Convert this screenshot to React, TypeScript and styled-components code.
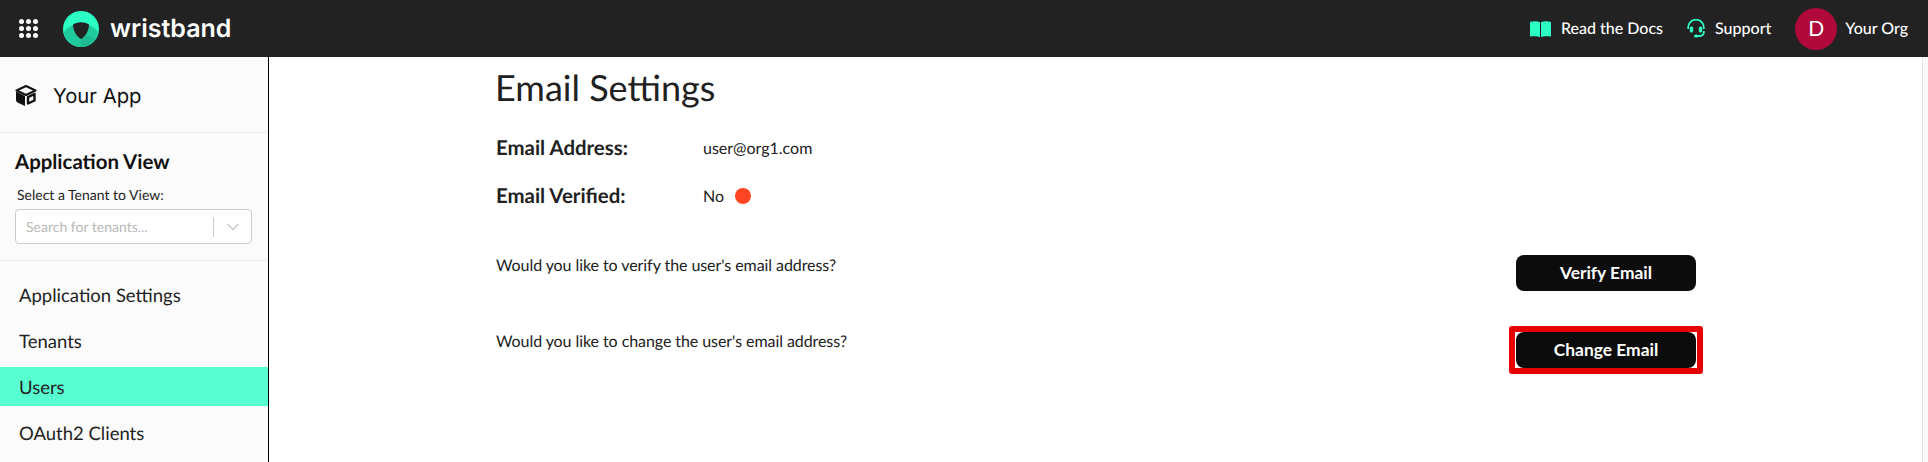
import styled, { createGlobalStyle } from 'styled-components';
import { FiChevronDown } from 'react-icons/fi';

const GlobalStyle = createGlobalStyle`
  html, body {
    margin: 0;
    height: 100%;
    overflow: hidden;
    background: #fff;
    font-family: 'Lato', 'Liberation Sans', sans-serif;
    color: #212121;
    text-rendering: geometricPrecision;
  }
  * { box-sizing: border-box; }
`;

const Page = styled.div`
  display: flex;
  flex-direction: column;
  height: 462px;
`;

const TopBar = styled.header`
  flex: 0 0 57px;
  display: flex;
  align-items: center;
  justify-content: space-between;
  padding: 0 20px 0 19px;
  background: #222222;
  color: #fff;
`;

const BarGroup = styled.div`
  display: flex;
  align-items: center;
`;

const AppGrid = styled.div`
  display: grid;
  grid-template-columns: repeat(3, 5px);
  gap: 2px;
  margin-right: 25px;
  span {
    width: 5px;
    height: 5px;
    border-radius: 50%;
    background: #fff;
  }
`;

const BrandName = styled.span`
  margin-left: 11px;
  font-family: 'Inter', sans-serif;
  font-size: 25px;
  font-weight: 600;
`;

const BarLink = styled.a`
  display: flex;
  align-items: center;
  gap: 10px;
  margin-right: 24px;
  font-size: 16px;
  font-weight: 500;
  svg { flex: none; }
`;

const Avatar = styled.div`
  width: 42px;
  height: 42px;
  margin-right: 8px;
  display: flex;
  align-items: center;
  justify-content: center;
  border-radius: 50%;
  background: #b00a3c;
  font-size: 21px;
`;

const OrgName = styled.span`
  font-size: 16px;
  font-weight: 500;
`;

const Body = styled.div`
  flex: 1;
  display: flex;
  min-height: 0;
`;

const Sidebar = styled.aside`
  flex: 0 0 269px;
  background: #fbfbfb;
  border-right: 1px solid #000;
`;

const AppHeading = styled.div`
  height: 76px;
  display: flex;
  align-items: center;
  gap: 16px;
  padding: 2px 0 0 15px;
  border-bottom: 1px solid #ececec;
  font-family: 'Inter', sans-serif;
  font-size: 20.3px;
  color: #111;
`;

const ViewPicker = styled.div`
  height: 128px;
  padding: 17px 15px 0;
  border-bottom: 1px solid #ececec;
`;

const ViewTitle = styled.div`
  font-size: 20.4px;
  font-weight: 700;
  color: #111;
  line-height: 24px;
`;

const PickerLabel = styled.div`
  margin: 12px 0 5px 2px;
  font-size: 14px;
  line-height: 18px;
  color: #222;
`;

const SelectBox = styled.div`
  width: 237px;
  height: 35px;
  display: flex;
  align-items: center;
  padding-left: 10px;
  background: #fff;
  border: 1px solid #ccc;
  border-radius: 4px;
  font-size: 14px;
  color: #b8b8b8;
`;

const SelectText = styled.span`
  flex: 1;
`;

const SelectDivider = styled.span`
  width: 1px;
  height: 20px;
  background: #ccc;
`;

const SelectArrow = styled.span`
  width: 37px;
  display: flex;
  justify-content: center;
  color: #ccc;
`;

const NavList = styled.nav`
  display: flex;
  flex-direction: column;
  gap: 7px;
  padding-top: 14px;
`;

const NavItem = styled.a<{ $active?: boolean }>`
  height: 39px;
  display: flex;
  align-items: center;
  padding-left: 19px;
  font-size: 18.5px;
  color: #222;
  background: ${(p) => (p.$active ? '#57ffd0' : 'transparent')};
`;

const Main = styled.main`
  flex: 1;
  padding-left: 1px;
`;

const ScrollTrack = styled.div`
  flex: 0 0 6px;
  background: #fafafa;
  border-left: 1px solid #e4e4e4;
`;

const Content = styled.div`
  width: 1200px;
  margin: 0 auto;
`;

const Title = styled.h1`
  margin: 8px 0 27px -1px;
  font-size: 36px;
  line-height: 44px;
  font-weight: 400;
  color: #212121;
`;

const InfoRow = styled.div`
  display: flex;
  align-items: center;
  height: 24px;
  margin-bottom: 24px;
`;

const InfoLabel = styled.div`
  width: 207px;
  font-size: 20.4px;
  font-weight: 700;
`;

const InfoValue = styled.div`
  display: flex;
  align-items: center;
  gap: 11px;
  font-size: 16px;
`;

const StatusDot = styled.span`
  width: 16px;
  height: 16px;
  border-radius: 50%;
  background: #ff4521;
`;

const ActionRow = styled.div<{ $gap: number }>`
  display: flex;
  justify-content: space-between;
  margin-top: ${(p) => p.$gap}px;
`;

const Question = styled.div<{ $top: number }>`
  padding-top: ${(p) => p.$top}px;
  font-size: 16px;
  line-height: 20px;
  letter-spacing: -0.07px;
`;

const ActionButton = styled.button`
  position: relative;
  width: 180px;
  height: 36px;
  padding: 0 0 2px;
  border: 0;
  border-radius: 8px;
  background: #0c0c0c;
  color: #fff;
  font-family: inherit;
  font-size: 17.4px;
  font-weight: 700;
`;

const Highlight = styled.span`
  position: absolute;
  inset: -6px -7px;
  border: 6px solid #e60000;
  border-radius: 3px;
  pointer-events: none;
`;

const BrandLogo = () => (
  <svg width="36" height="36" viewBox="0 0 36 36">
    <circle cx="18" cy="18" r="18" fill="#2bffc4" />
    <path d="M0.5 21.5C5 15 12 12.5 18 12.5S31 15 35.5 21.5C33.5 29.5 26.5 36 18 36S2.5 29.5 0.5 21.5Z" fill="#1fcb9c" />
    <path d="M18 23.5C23 23.5 29 26 32.5 28.7C29.5 33 24 36 18 36Z" fill="#1fb08a" opacity="0.6" />
    <path d="M10 13.5C15 10.5 21 10.5 26 13.5C26 19.5 22.5 25.5 18 28C13.5 25.5 10 19.5 10 13.5Z" fill="#222" />
  </svg>
);

const CubeIcon = () => (
  <svg width="22" height="22" viewBox="0 0 22 22">
    <path d="M11 1L20.5 5.5L11 10L1.5 5.5Z" fill="none" stroke="#111" strokeWidth="2" strokeLinejoin="round" />
    <path d="M1 6.5L10 11V21L2.5 17.5Q1 16.8 1 15Z" fill="#111" />
    <path d="M13 12.2L19.5 9V15.5L13 18.5Z" fill="none" stroke="#111" strokeWidth="2.4" strokeLinejoin="round" />
  </svg>
);

const BookIcon = () => (
  <svg width="21" height="16" viewBox="0 0 21 16">
    <path d="M0 1C3.5 0 7.5 0 10 1.2V16C7.5 15 3.5 15 0 15.5Z" fill="#2bffc4" />
    <path d="M21 1C17.5 0 13.5 0 11 1.2V16C13.5 15 17.5 15 21 15.5Z" fill="#2bffc4" />
  </svg>
);

const HeadsetIcon = () => (
  <svg width="18" height="19" viewBox="0 0 18 19" fill="none">
    <path d="M1.2 10V8.5a7.8 7.8 0 0 1 15.6 0V10" stroke="#2bffc4" strokeWidth="1.8" />
    <rect x="2.8" y="7.5" width="3.4" height="6" rx="1.5" fill="#2bffc4" />
    <rect x="11.8" y="7.5" width="3.4" height="6" rx="1.5" fill="#2bffc4" />
    <path d="M16.8 12v1.5a3.5 3.5 0 0 1-3.5 3.5H9" stroke="#2bffc4" strokeWidth="1.8" />
    <rect x="7" y="15.5" width="4" height="3" rx="1.5" fill="#2bffc4" />
  </svg>
);

const App = () => (
  <Page>
    <GlobalStyle />
    <TopBar>
      <BarGroup>
        <AppGrid>
          {Array.from({ length: 9 }, (_, i) => (
            <span key={i} />
          ))}
        </AppGrid>
        <BrandLogo />
        <BrandName>wristband</BrandName>
      </BarGroup>
      <BarGroup>
        <BarLink>
          <BookIcon />
          Read the Docs
        </BarLink>
        <BarLink>
          <HeadsetIcon />
          Support
        </BarLink>
        <Avatar>D</Avatar>
        <OrgName>Your Org</OrgName>
      </BarGroup>
    </TopBar>
    <Body>
      <Sidebar>
        <AppHeading>
          <CubeIcon />
          Your App
        </AppHeading>
        <ViewPicker>
          <ViewTitle>Application View</ViewTitle>
          <PickerLabel>Select a Tenant to View:</PickerLabel>
          <SelectBox>
            <SelectText>Search for tenants...</SelectText>
            <SelectDivider />
            <SelectArrow>
              <FiChevronDown size={20} />
            </SelectArrow>
          </SelectBox>
        </ViewPicker>
        <NavList>
          <NavItem>Application Settings</NavItem>
          <NavItem>Tenants</NavItem>
          <NavItem $active>Users</NavItem>
          <NavItem>OAuth2 Clients</NavItem>
        </NavList>
      </Sidebar>
      <Main>
        <Content>
          <Title>Email Settings</Title>
          <InfoRow>
            <InfoLabel>Email Address:</InfoLabel>
            <InfoValue>user@org1.com</InfoValue>
          </InfoRow>
          <InfoRow>
            <InfoLabel>Email Verified:</InfoLabel>
            <InfoValue>
              No
              <StatusDot />
            </InfoValue>
          </InfoRow>
          <ActionRow $gap={47}>
            <Question $top={1}>Would you like to verify the user's email address?</Question>
            <ActionButton>Verify Email</ActionButton>
          </ActionRow>
          <ActionRow $gap={41}>
            <Question $top={0}>Would you like to change the user's email address?</Question>
            <ActionButton>
              Change Email
              <Highlight />
            </ActionButton>
          </ActionRow>
        </Content>
      </Main>
      <ScrollTrack />
    </Body>
  </Page>
);

export default App;
